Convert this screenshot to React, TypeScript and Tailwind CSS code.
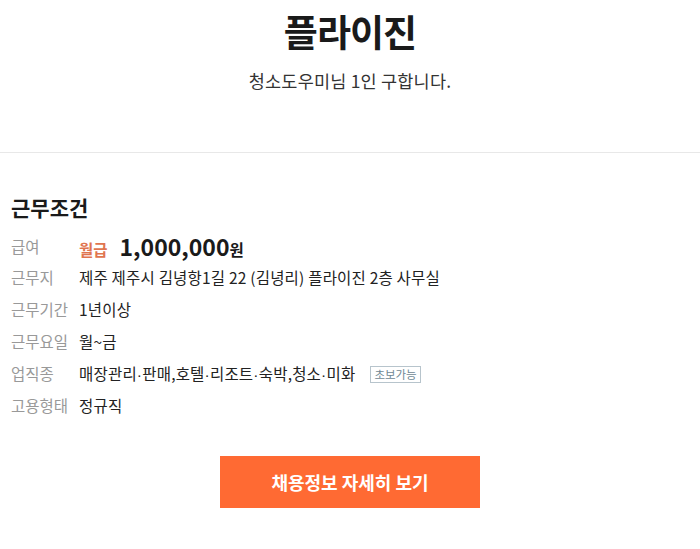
const font = { fontFamily: '"Noto Sans CJK KR", "Noto Sans", sans-serif' }

// 가운뎃점은 폭이 좁게 보이도록 라틴 글꼴로
const Dot = () => <span style={{ fontFamily: '"Liberation Sans", sans-serif' }}>·</span>

const rows: { label: string; value: React.ReactNode }[] = [
  { label: "근무지", value: "제주 제주시 김녕항1길 22 (김녕리) 플라이진 2층 사무실" },
  { label: "근무기간", value: "1년이상" },
  { label: "근무요일", value: "월~금" },
  {
    label: "업직종",
    value: (
      <span className="flex items-center">
        <span>
          매장관리<Dot />판매,호텔<Dot />리조트<Dot />숙박,청소<Dot />미화
        </span>
        <span className="ml-[15px] border border-[#b7c4cc] px-[3px] text-[11.5px] leading-[15px] tracking-normal text-[#6f8894]">
          초보가능
        </span>
      </span>
    ),
  },
  { label: "고용형태", value: "정규직" },
]

export default function App() {
  return (
    <div className="w-[700px] h-[549px] bg-white text-[#222]" style={font}>
      <header className="border-b border-[#e8e8e8] h-[153px] flex flex-col items-center pt-[8px]">
        <h1 className="text-[37px] font-bold leading-[46px] tracking-tight text-[#1a1a1a]">플라이진</h1>
        <p className="mt-[15px] text-[17.5px] leading-[24px] tracking-[0.2px] text-[#333]">청소도우미님 1인 구합니다.</p>
      </header>

      <section className="px-[11px] pt-[40px]">
        <h2 className="text-[21px] font-bold leading-[28px] text-[#1a1a1a]">근무조건</h2>
        <dl className="mt-[10px] text-[15.5px]">
          <div className="flex items-center h-[31px]">
            <dt className="w-[68px] text-[#999]">급여</dt>
            <dd className="flex items-baseline">
              <span className="font-bold text-[#e0754f]">월급</span>
              <span className="ml-[12px] text-[23px] font-bold text-[#1a1a1a]">1,000,000</span>
              <span className="font-bold text-[#1a1a1a]">원</span>
            </dd>
          </div>
          {rows.map((r) => (
            <div key={r.label} className="flex items-center h-[32px]">
              <dt className="w-[68px] text-[#999]">{r.label}</dt>
              <dd className="tracking-[0.2px] text-[#222]">{r.value}</dd>
            </div>
          ))}
        </dl>
      </section>

      <div className="flex justify-center mt-[34px]">
        <button className="w-[260px] h-[52px] bg-[#ff6a33] text-white text-[18px] font-bold">
          채용정보 자세히 보기
        </button>
      </div>
    </div>
  )
}
